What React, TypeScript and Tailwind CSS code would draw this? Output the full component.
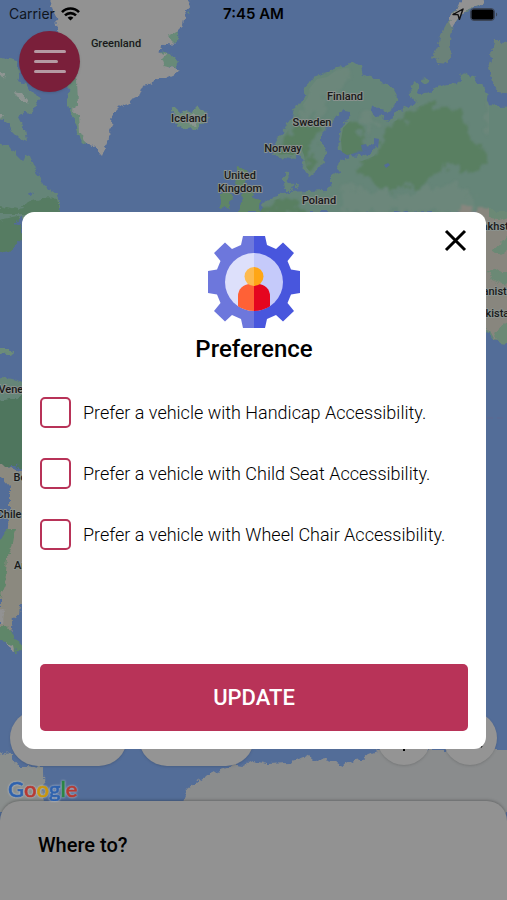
import { useState } from 'react';

const PREFERENCES = [
  { id: 'handicap', label: 'Prefer a vehicle with Handicap Accessibility.' },
  { id: 'child-seat', label: 'Prefer a vehicle with Child Seat Accessibility.' },
  { id: 'wheel-chair', label: 'Prefer a vehicle with Wheel Chair Accessibility.' },
];

const PLACES = [
  { name: 'Greenland', x: 116, y: 47 },
  { name: 'Iceland', x: 189, y: 122 },
  { name: 'Finland', x: 345, y: 100 },
  { name: 'Sweden', x: 312, y: 126 },
  { name: 'Norway', x: 283, y: 152 },
  { name: 'United', x: 240, y: 179 },
  { name: 'Kingdom', x: 240, y: 192 },
  { name: 'Poland', x: 319, y: 204 },
  { name: 'Kazakhstan', x: 492, y: 230 },
  { name: 'Afghanistan', x: 489, y: 295 },
  { name: 'Pakistan', x: 494, y: 317 },
  { name: 'Venezuela', x: 24, y: 393 },
  { name: 'Bolivia', x: 30, y: 481 },
  { name: 'Chile', x: 9, y: 518 },
  { name: 'Argentina', x: 38, y: 569 },
];

const WorldMap = () => (
  <svg
    className="absolute inset-0 h-full w-full"
    viewBox="0 0 507 900"
    preserveAspectRatio="xMidYMid slice"
    aria-hidden="true"
  >
    <defs>
      {/* Roughens the coastlines */}
      <filter
        id="coast"
        x="-20"
        y="-20"
        width="547"
        height="940"
        filterUnits="userSpaceOnUse"
        colorInterpolationFilters="sRGB"
      >
        <feTurbulence type="fractalNoise" baseFrequency="0.14" numOctaves="3" seed="4" result="noise" />
        <feDisplacementMap in="SourceGraphic" in2="noise" scale="8" xChannelSelector="R" yChannelSelector="G" />
      </filter>
      <filter
        id="terrain"
        x="-20"
        y="-20"
        width="547"
        height="940"
        filterUnits="userSpaceOnUse"
        colorInterpolationFilters="sRGB"
      >
        <feTurbulence type="fractalNoise" baseFrequency="0.1" numOctaves="3" seed="9" result="noise" />
        <feDisplacementMap in="SourceGraphic" in2="noise" scale="22" xChannelSelector="R" yChannelSelector="G" />
        <feGaussianBlur stdDeviation="0.8" />
      </filter>
      <clipPath id="eurasia">
        <path d="M276 155l2-12 12-15 10-19 8-12 1-8 8-10 10-2 11-8 9-1 8-3 8 5 2 8 8 1 11 6 9 7 5 9-3 6-8 4-9-1-6-3-1 4 6 9 6-1 4 6 10-5 2-5 11-6 8-2 22-16 22-3 27 8v231l-25-2-8-12V212H260l6-10 12-3 10-5 20-1 18-1 8-4v-11l8-3-3-6 4-6 9-2 10 1 12-5 4-7-5-1-12 4-14 3-5-3-1-12 2-12 8-8 3-9-8-1-10 6-8 11-6 6 0 12 4 5-2 11-6 7-7 5-5-6-2-12-3-7-8 7-6-1z" />
      </clipPath>
    </defs>
    <rect width="507" height="900" fill="#536d98" />

    <g filter="url(#coast)">
      {/* Greenland */}
      <path
        fill="#688a78"
        d="M70 80l8-4 8 70-6-6-6-18-6-18zM154 56l8-6 7 3 8 10-1 5-7-2-6 2-6-4zM162 34l8-6 3-10 8-8 3 5-4 8-2 12 1 6-5 2-6-4-6 0zM189 9l2 5-3-1z"
      />
      <path
        fill="#929292"
        d="M46 -10l7 18 5 20 2 24 17 28 1 25-6 4 7 8 1 14 6 12 8 4 8 9 3-8 4-10-1-8 4-8 1-10 6-6 7-2 6-6 8-4 3-8 8-2 8-6 6 0 7-3 8-4-8-4-8-2-2-6 5-5-8-4 8-7 8 1-8-8 9-4 7-7 2-10 6-16z"
      />
      {/* Iceland */}
      <path
        fill="#6c8c79"
        d="M172 108l4 1 4 4 6-3 6 2 5-5 4 2 5 3-1 4 3 4-5 4-6 4-8 2-8-2-6-3 1-4-4-4 3-2-4-3z"
      />
      <path fill="#8b9590" d="M185 118l9-4 7 5-5 6-8-1z" />

      {/* Canadian arctic and Labrador */}
      <path
        fill="#6a877b"
        d="M-20 56l28 4 10 2 2 10-3 8 8 4 8 8 6 8-4 8-3 6-8-1-6 4 4 8 4 5 2 12-9-4-8-8-6-8-25-2z"
      />
      <path fill="#8e9592" d="M15 92l8 2 5 6-2 4-8-5zM0 72l6 4-1 3-5-3zM0 115l4 2-2 3-2-1z" />
      <path
        fill="#658578"
        d="M-20 141l28 4 6 8 9 9 3-9 4 4 5 13 5 9 6 8 9 5 5 9v11l-36 7-8 6-2 14-8 6-26 11z"
      />
      <path fill="#567c62" d="M30 202l12-4 16 1 2 15H0v-8l16 4zM-20 224l38-8 6 22-14 13-30 6z" />
      <path fill="#536d98" d="M23 216l-10 7 10 2zM29 192l3-1 2 3-3 1z" />

      {/* Central and South America */}
      <path fill="#6c8c79" d="M-20 348l28 0 7 4-7 3-28-1z" />
      <path fill="#658578" d="M-20 379l28-1 16 4v22l-44 14z" />
      <path fill="#4f765e" d="M-20 403l32-4 12-4v75l-10-5-34 3z" />
      <path fill="#8b897f" d="M-20 468l28-3 16 7v128l-4 6-1 8-6 4-1 10-5 6-7-4V548l7-8 2-30V486l-9-10h-20z" />
      <path fill="#5f8669" d="M15 530l-2 12-6 14-2 30-5 12h-20v-58h20l6-10zM-20 624l30 4 6 12 6 4v6l-8 1-4-7-30-6z" />
      <path fill="#929292" d="M0 610l4 2-1 12-3-2zM6 642l7 4 1 5-5-2z" />

      {/* British Isles */}
      <path
        fill="#5f8566"
        d="M238 167l6 1 4 5-3 8 4 6 4 9 7 5-2 12h-20l2-10 4-6-5-8-3-10zM221 194l8-2 3 6-2 9-11 2z"
      />

      {/* Eurasia */}
      <path
        fill="#658578"
        d="M272 156l2-14 12-15 10-19 8-12 1-8 8-10 12-4 11-8 9-1 8-3 8 5 2 8 8 1 11 6 11 7 5 9-3 8-8 4-9-1-6-3-1 4 6 7 6-1 4 6 8-5 2-5 11-6 8-2-5-10-1-9 5-2 3 2-2 7 5 4 8-4 8-5 12-3 8-1 5-4-3-7 11 4 12 8 3 8 4 4-2 7 8 4 27-1v231l-28 2-8-7-8-4V212H260l6-12 12-3 10-5 20-1 18-1 6-4v-11l8-3-3-8 4-6 9-2 10 1 12-5 4-5-5-1-12 4-14 3-5-3-1-12 2-12 8-8 3-7-8-1-8 6-8 11-6 6 0 12 4 5-2 11-6 9-9 7-5-6-2-12-3-7-8 7-8-1z"
      />
      <path fill="#658578" d="M284 172l4 1 1 8 5 4-2 6-7 0-1-9zM295 184l4 0-1 4-3 0zM422 79l4-1 2 4-4 3z" />
      <path
        fill="#6b8279"
        d="M449 20l4-8 8-8 4-14h16l2 13-20 10-10 12-3 15 1 18-4 6-8-1-6-6 3-8 5-14zM495 42l32-1v55l-29-4-6-12-4-10 4-9-1-8z"
      />
      <path fill="#929292" d="M459 6l6-16h17l1 13-17 7-8 8-5 8-4-2 2-8z" />
      <path fill="#88867e" d="M480 214h47v118l-20 8-12-2-8-8-7-8z" />
      <path
        fill="#6b8975"
        d="M480 210h47v8l-18-1-12 3-17-2zM492 250l8-6 8-8h19v12l-19 2-8 6zM488 272l8-4 6 4 25 0v14l-25-2-10-4zM494 332l14-10h19v16l-19 6-8-1z"
      />
    </g>

    {/* Forest and steppe inside the continent */}
    <g clipPath="url(#eurasia)">
      <g filter="url(#terrain)">
        <path
          fill="#597f61"
          d="M276 165l4-2 8 5 5-8 14-3 10-20 6-9-6-8-12 6-10-2-8 12-8 12zM295 165l16-8 6 2-5 16-10 8-5-6zM333 127l12-7 10 5 12 18 1 8-10 4-18 3-9-5-1-12zM385 125l22-8 14-12 22 3 19-1 4 20 6 14 14 12-4 16-12 3-16-8-13 10-12 2-9 16-16-8-17 8-12-12-20-10 4-10 14-4 10-14zM260 206l22-8 14 2 10 14h-46z"
        />
        <path
          fill="#6c877b"
          d="M304 94l9-15 18-8 12-3 8 2-4 12-12 14-10 4-4 14-8 2-8 8-6-10zM365 110l10 4 2 12-10 6-10-10zM340 190l16-4 16 6 18 0 18 4 24-10 22-4 18 12v17H340zM485 106l30 4v40l-16-8-14-16z"
        />
        <path fill="#88867e" d="M458 210l24-5 12 2v14l-8 2-27-8z" />
      </g>
      <path
        fill="#536d98"
        d="M361 145l5-1 3 7-3 3-4-4zM374 138l5 1-1 9-4-3zM299 162l3-2 3 4-4 2zM384 165l4-2 2 2-4 3z"
      />
    </g>

    {/* Antarctica */}
    <g filter="url(#coast)">
      <path fill="#8a8e8d" d="M-20 758l26-6 5 2 0 5 6 7 12 0 14 3 1 42h-64z" />
      <path
        fill="#8a8c8d"
        d="M182 802l5-12 9-8 14-9 14-4 12-5 8 1 8-4 16 3 20-1 14-4 6-4 6 5 12-1 10 3 8 4 9-5 8-1 8-7 8-3h150v62H182z"
      />
    </g>
    <path stroke="#5f6890" strokeDasharray="6 4" fill="none" d="M487 418h20" />

    <g
      fontFamily="Roboto, sans-serif"
      fontSize="11"
      fontWeight="500"
      textAnchor="middle"
      fill="#191919"
      stroke="#8b938f"
      strokeWidth="2"
      strokeLinejoin="round"
      paintOrder="stroke"
    >
      {PLACES.map((place) => (
        <text key={place.name} x={place.x} y={place.y}>
          {place.name}
        </text>
      ))}
    </g>
  </svg>
);

const StatusBar = () => (
  <div className="grid grid-cols-3 items-center px-[9px] pt-1 font-['Inter',sans-serif] text-[15px] leading-5 text-black">
    <div className="flex items-center gap-1.5">
      <span className="text-sm leading-5 text-[#10151d]">Carrier</span>
      <svg width="19" height="14" viewBox="0 0 19 14" fill="none" stroke="#000" strokeWidth="2.6">
        <path d="M1 5.2C5.8.3 13.2.3 18 5.2" />
        <path d="M4 8.4c3.1-3 7.9-3 11 0" />
        <path d="M9.5 13.6L6.6 10.7c1.6-1.5 4.2-1.5 5.8 0z" fill="#000" stroke="none" />
      </svg>
    </div>
    <span className="text-center font-semibold">7:45 AM</span>
    <div className="flex items-center justify-end gap-1.5">
      <svg width="12" height="12" viewBox="0 0 12 12" fill="none" stroke="#111" strokeWidth="1.4" strokeLinejoin="round">
        <path d="M11 1L1 6.5l5 .1 1.4 4.9z" />
      </svg>
      <svg width="28" height="13" viewBox="0 0 28 13">
        <rect x=".5" y=".5" width="24" height="12" rx="3.5" fill="#4a5a78" stroke="#3c4658" />
        <rect x="1.5" y="1.5" width="22" height="10" rx="2" fill="#000" />
        <path d="M26 4.5c1.6.6 1.6 3.4 0 4z" fill="#3c4658" />
      </svg>
    </div>
  </div>
);

const GearIcon = () => (
  <svg className="h-[92px] w-[92px]" viewBox="0 0 92 92" aria-hidden="true">
    <defs>
      <clipPath id="gear-left">
        <rect width="46" height="92" />
      </clipPath>
      <clipPath id="gear-right">
        <rect x="46" width="46" height="92" />
      </clipPath>
      <path
        id="gear"
        d="M35 0H57L59 9 68 13 75 6.5 86 17 79.500 25 83 33.500 92 35V57L83 58.500 79.500 67 86 75 75 85.500 68 79 59 83 57 92H35L33 83 24 79 17 85.500 6 75 12.500 67 9 58.500 0 57V35L9 33.500 12.500 25 6 17 17 6.500 24 13 33 9Z"
      />
    </defs>
    <use href="#gear" fill="#6d77dc" clipPath="url(#gear-left)" />
    <use href="#gear" fill="#4856dd" clipPath="url(#gear-right)" />
    <path d="M46 17a29 29 0 0 0 0 58z" fill="#dde0fb" />
    <path d="M46 17a29 29 0 0 1 0 58z" fill="#c5cafa" />
    <path d="M46 48H42a12 12 0 0 0-12 12v10.200A29 29 0 0 0 46 75z" fill="#ff6136" />
    <path d="M46 48h4a12 12 0 0 1 12 12v10.200A29 29 0 0 1 46 75z" fill="#e5051f" />
    <path d="M46 31a9.500 9.500 0 0 0 0 19z" fill="#fdba4f" />
    <path d="M46 31a9.500 9.500 0 0 1 0 19z" fill="#ffa615" />
  </svg>
);

const GoogleLogo = () => (
  <svg
    className="h-[35px] w-20 drop-shadow-[0_0_1px_#c3cad6]"
    viewBox="0 0 80 35"
    role="img"
    aria-label="Google"
  >
    <text x="8" y="31" fontFamily="Lato, sans-serif" fontSize="22" fontWeight="500" strokeWidth="0.6">
      <tspan fill="#2f62ad" stroke="#2f62ad">G</tspan>
      <tspan fill="#b53a33" stroke="#b53a33">o</tspan>
      <tspan fill="#c8960f" stroke="#c8960f">o</tspan>
      <tspan fill="#2f62ad" stroke="#2f62ad">g</tspan>
      <tspan fill="#2c8544" stroke="#2c8544">l</tspan>
      <tspan fill="#b53a33" stroke="#b53a33">e</tspan>
    </text>
  </svg>
);

const PreferenceDialog = () => {
  const [selected, setSelected] = useState<string[]>([]);

  const toggle = (id: string) => {
    setSelected((prev) => (prev.includes(id) ? prev.filter((item) => item !== id) : [...prev, id]));
  };

  return (
    <div
      role="dialog"
      aria-labelledby="preference-title"
      className="relative flex w-full flex-col rounded-xl bg-white px-[18px] pt-6 pb-[18px]"
    >
      <button type="button" aria-label="Close" className="absolute top-[17px] right-[19px]">
        <svg width="23" height="23" viewBox="0 0 23 23" stroke="#000" strokeWidth="3">
          <path d="M2 2l19 19M21 2L2 21" />
        </svg>
      </button>

      <div className="flex flex-col items-center">
        <GearIcon />
        <h1 id="preference-title" className="mt-[5px] text-2xl leading-8 font-medium text-black">
          Preference
        </h1>
      </div>

      <ul className="mt-8 flex flex-col gap-[30px]">
        {PREFERENCES.map((preference) => (
          <li key={preference.id} className="flex items-center gap-3">
            <input
              id={preference.id}
              type="checkbox"
              checked={selected.includes(preference.id)}
              onChange={() => toggle(preference.id)}
              className="h-[31px] w-[31px] shrink-0 appearance-none rounded-[5px] border-2 border-[#b83358] checked:bg-[#b83358]"
            />
            <label htmlFor={preference.id} className="text-lg leading-6 font-light text-black">
              {preference.label}
            </label>
          </li>
        ))}
      </ul>

      <button
        type="button"
        className="mt-[114px] h-[67px] rounded-[5px] bg-[#b83358] text-[22px] leading-7 font-medium text-white"
      >
        UPDATE
      </button>
    </div>
  );
};

const App = () => (
  <div className="relative flex min-h-screen flex-col overflow-hidden font-['Roboto',sans-serif]">
    <WorldMap />

    <div className="relative flex flex-1 flex-col">
      <StatusBar />

      <button
        type="button"
        aria-label="Menu"
        className="mt-[7px] ml-[19px] flex h-[61px] w-[61px] flex-col justify-center gap-[7px] rounded-full bg-[#7a1f3a] pl-[15px] shadow-sm"
      >
        <span className="h-[3px] w-8 rounded-full bg-[#b59aa3]" />
        <span className="h-[3px] w-6 rounded-full bg-[#b59aa3]" />
        <span className="h-[3px] w-8 rounded-full bg-[#b59aa3]" />
      </button>

      <div className="mt-auto flex items-center gap-3 px-2.5">
        <div className="h-14 w-[117px] rounded-full bg-[#949494] shadow-sm" />
        <div className="h-14 w-[115px] rounded-full bg-[#949494] shadow-sm" />
        <div className="ml-auto flex h-[54px] w-[54px] items-center justify-center rounded-full bg-[#949494] shadow-sm">
          <svg width="26" height="28" viewBox="0 0 26 28" stroke="#000" strokeWidth="2">
            <path d="M13 0v27M0 11h26" />
          </svg>
        </div>
        <div className="flex h-[54px] w-[54px] items-center justify-center rounded-full bg-[#949494] shadow-sm">
          <svg width="26" height="26" viewBox="0 0 26 26" fill="none" stroke="#000" strokeWidth="2">
            <circle cx="12" cy="11" r="8" />
            <path d="M18 17l7 5" />
          </svg>
        </div>
      </div>

      <GoogleLogo />

      <section className="rounded-t-[20px] bg-[#929292] px-[38px] pt-[30px] pb-[41px] shadow-[0_-1px_3px_rgba(0,0,0,0.25)]">
        <h2 className="text-xl leading-7 font-medium text-black">Where to?</h2>
      </section>
    </div>

    <div className="absolute inset-0 flex items-center pt-[61px] pr-[21px] pl-[22px]">
      <PreferenceDialog />
    </div>
  </div>
);

export default App;
